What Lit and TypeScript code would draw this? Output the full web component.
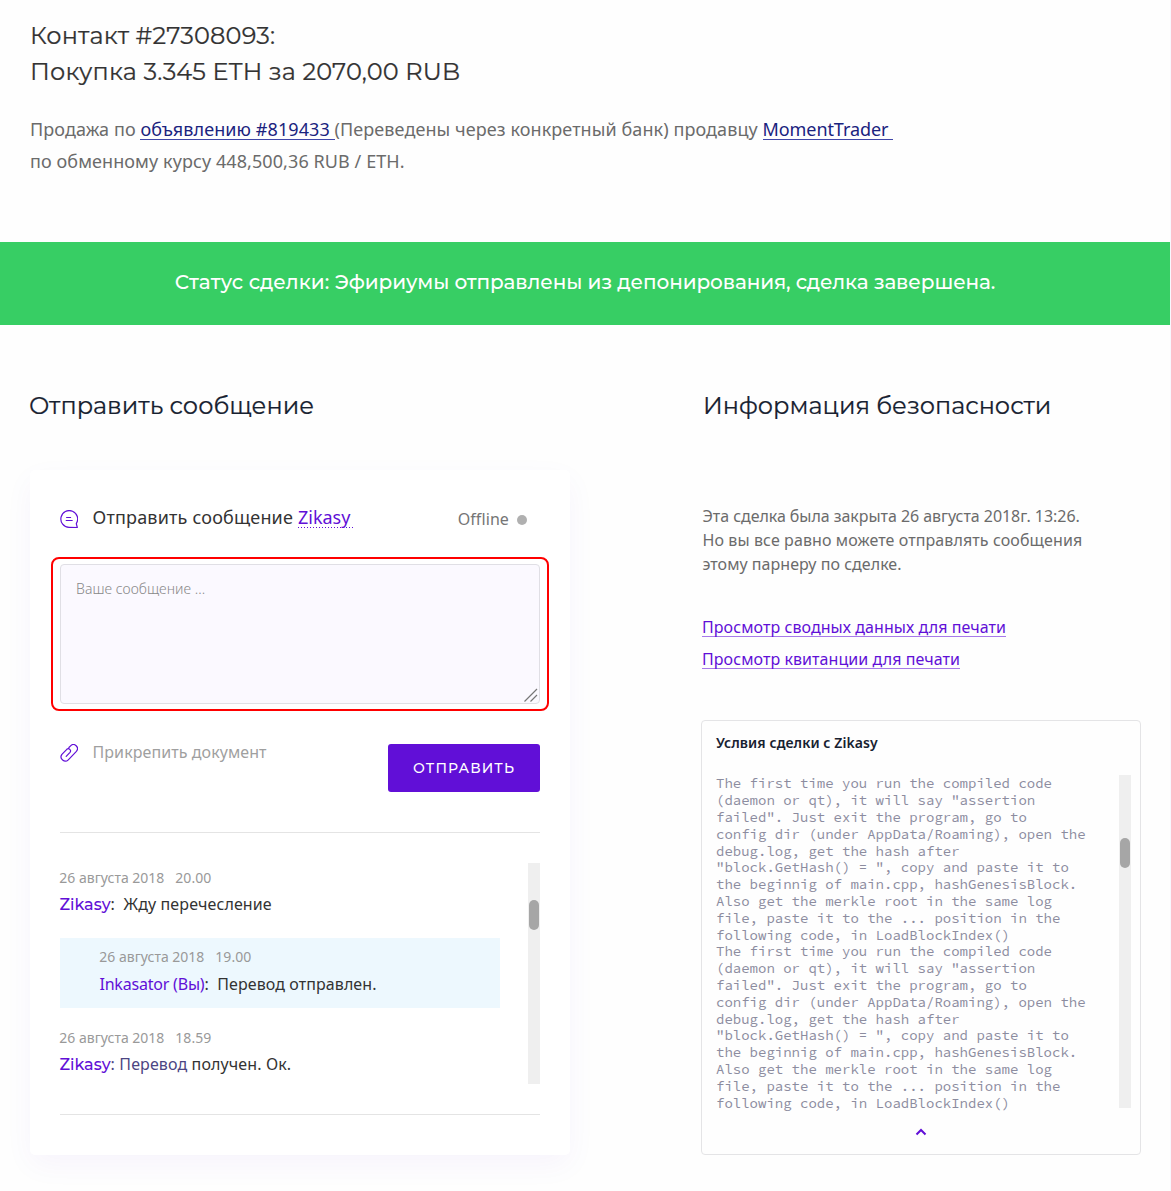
import { LitElement, html, css } from "lit";
import { customElement } from "lit/decorators.js";

interface Message {
  date: string;
  time: string;
  author: string;
  own?: boolean;
  text: unknown;
}

const TERMS = [
  'The first time you run the compiled code',
  '(daemon or qt), it will say "assertion',
  'failed". Just exit the program, go to',
  'config dir (under AppData/Roaming), open the',
  'debug.log, get the hash after',
  '"block.GetHash() = ", copy and paste it to',
  'the beginnig of main.cpp, hashGenesisBlock.',
  'Also get the merkle root in the same log',
  'file, paste it to the ... position in the',
  'following code, in LoadBlockIndex()',
].join("\n");

const MESSAGES: Message[] = [
  { date: "26 августа 2018", time: "20.00", author: "Zikasy", text: html`:&nbsp; Жду перечесление` },
  { date: "26 августа 2018", time: "19.00", author: "Inkasator (Вы)", own: true, text: html`:&nbsp; Перевод отправлен.` },
  { date: "26 августа 2018", time: "18.59", author: "Zikasy", text: html`<span class="tint">: Перевод</span> получен. Ок.` },
];

@customElement("app-root")
export class AppRoot extends LitElement {
  static styles = css`
    :host {
      display: block;
      box-sizing: border-box;
      width: 1171px;
      height: 1191px;
      overflow: hidden;
      background: #fefefe;
      border-right: 1px solid #f8f7fe;
      font-family: "Noto Sans", sans-serif;
      color: #333;
    }
    * { box-sizing: border-box; }
    h1, h2, h3, p { margin: 0; font-weight: 400; }
    h1, h2, .status, .send { font-family: Montserrat, Inter, sans-serif; white-space: nowrap; }
    .intro { padding: 18px 30px 0; height: 242px; }
    h1 { font-size: 24px; line-height: 36px; letter-spacing: .17px; -webkit-text-stroke: .2px #333; }
    .desc { margin-top: 23px; font-size: 18px; line-height: 32px; color: #6b6b6b; white-space: pre; letter-spacing: .085px; }
    .desc a { color: #1a237e; text-decoration: none; background: linear-gradient(#3f46a8, #3f46a8) 0 22px / 100% 1px no-repeat; }
    .desc .seller { letter-spacing: -.08px; }
    .status {
      height: 83px; background: #37ce64; color: #fff; font-size: 20px; font-weight: 500;
      line-height: 81px; text-align: center; letter-spacing: -.1px;
    }
    .status span { letter-spacing: .08px; }
    .cols { display: grid; grid-template-columns: 672px 1fr; padding-left: 30px; }
    h2 { font-size: 24px; line-height: 36px; margin: 63px 0 0 -1px; color: #172130; letter-spacing: .03px; -webkit-text-stroke: .2px #172130; }
    .security h2 { margin-left: 1px; letter-spacing: 0; }
    .card {
      width: 540px; height: 685px; margin-top: 46px; padding: 0 30px; background: #fff;
      border-radius: 5px; box-shadow: 0 10px 30px rgba(97, 15, 215, .045);
    }
    .head { display: flex; align-items: center; height: 96px; }
    .head svg, .attach svg { display: block; flex: none; margin-right: 14.5px; }
    .head svg { margin-top: 2px; }
    .title { font-size: 18px; line-height: 24px; flex: 1; white-space: pre; letter-spacing: .18px; margin-top: -2px; }
    .title a { color: #610fd7; letter-spacing: 0; background: repeating-linear-gradient(90deg, #610fd7 0 1px, transparent 1px 3px) 0 22px / 100% 1px no-repeat; }
    .offline { display: flex; align-items: center; gap: 8px; font-size: 16px; color: #757575; margin-right: 13px; padding-top: 4px; letter-spacing: .1px; }
    .offline span { margin-top: -2px; }
    .dot { width: 10px; height: 10px; border-radius: 50%; background: #b0b0b0; }
    .focus { margin: -9px -9px 0; height: 154px; padding: 5px 7px; border: 2px solid #f00; border-radius: 8px; }
    .area {
      display: flex; justify-content: space-between; height: 140px; padding: 14px 1px 1px 15px;
      border: 1px solid #e0dfe5; border-radius: 4px; background: #fbf9ff; font-size: 14px; line-height: 19px;
      font-weight: 300; color: #888; letter-spacing: .06px;
    }
    .area svg { align-self: flex-end; }
    .tools { display: flex; justify-content: space-between; align-items: flex-start; margin-top: 33px; height: 88px; }
    .attach { display: flex; font-size: 16px; line-height: 18px; color: #9f9f9f; letter-spacing: .08px; }
    .attach span { margin-top: -1px; }
    .send {
      width: 152px; height: 48px; border: 0; border-radius: 3px; background: #610fd7; color: #fff; padding: 0;
      font-size: 14px; font-weight: 500; letter-spacing: 1.1px;
    }
    .chat { display: flex; justify-content: space-between; border: solid #e4e4e4; border-width: 1px 0; height: 283px; padding-top: 30px; }
    .list { width: 440px; }
    .msg { height: 75px; padding-top: 4px; }
    .msg.own { height: 70px; margin-bottom: 15px; padding-left: 40px; padding-top: 8px; background: #edf8fe; }
    .meta { font-size: 14px; line-height: 22px; color: #999; display: flex; gap: 11px; margin-left: -.7px; }
    .line { font-size: 16px; line-height: 24px; padding-top: 3px; white-space: pre; letter-spacing: .12px; margin-left: -.6px; }
    .own .line { padding-top: 4px; letter-spacing: .08px; }
    .own .author { letter-spacing: -.2px; }
    .author { color: #610fd7; }
    .strong { font-family: Montserrat, Inter, sans-serif; font-weight: 500; letter-spacing: 0; }
    .tint { color: #4c4583; }
    .track { width: 12px; height: 221px; padding-top: 37px; padding-left: 1px; background: #efefef; }
    .thumb { width: 10px; height: 30px; border-radius: 5px; background: #a6a6a6; }
    .closed { margin: 80px 0 0 .5px; font-size: 16px; line-height: 24px; color: #6b6b6b; white-space: nowrap; }
    .closed span { display: block; letter-spacing: .04px; }
    .closed .first { letter-spacing: -.05px; }
    .closed .second { letter-spacing: .1px; }
    .links { display: flex; flex-direction: column; align-items: flex-start; gap: 8px; margin-top: 39px; font-size: 16px; line-height: 24px; letter-spacing: .07px; }
    .links a { color: #610fd7; background: linear-gradient(#a77ae9, #a77ae9) 0 21px / 100% 1px no-repeat; height: 24px; }
    .terms { width: 440px; height: 435px; margin: 49px 0 0 -1px; padding: 12px 9px 0 14px; border: 1px solid #e4e4e6; border-radius: 4px; }
    h3 { font-size: 14px; line-height: 20px; font-weight: 600; color: #172130; letter-spacing: .07px; }
    .body { display: flex; justify-content: space-between; height: 333px; margin-top: 22px; }
    .code { margin: .45px 0 0; font: 14px/16.8px "Source Code Pro", "Liberation Mono", monospace; color: #8c8c9f; }
    .terms .track { height: 333px; padding-top: 63px; }
    .up { display: block; margin: 20px 0 0 199px; }
  `;

  private renderMessage(m: Message) {
    return html`<div class="msg ${m.own ? "own" : ""}">
      <div class="meta"><span>${m.date}</span><span>${m.time}</span></div>
      <div class="line"><span class="author ${m.own ? "" : "strong"}">${m.author}</span>${m.text}</div>
    </div>`;
  }

  render() {
    return html`
      <div class="intro">
        <h1>Контакт #27308093:<br />Покупка 3.345 ETH за 2070,00 RUB</h1>
        <p class="desc">Продажа по <a>объявлению #819433 </a>(Переведены через конкретный банк) продавцу <a class="seller">MomentTrader </a>
по обменному курсу 448,500,36 RUB / ETH.</p>
      </div>
      <div class="status"><span>Статус сделки: </span>Эфириумы отправлены из депонирования, сделка завершена.</div>
      <div class="cols">
        <section>
          <h2>Отправить сообщение</h2>
          <div class="card">
            <div class="head">
              <svg width="18" height="18" viewBox="0 0 18 18" fill="none" stroke="#610fd7" stroke-width="1.2" stroke-linecap="round" stroke-linejoin="round">
                <path d="M16.3 13.6A8.4 8.4 0 1 0 9 17.4L17.3 17.5z" /><path d="M6.6 7.5h4M6.2 10.5h6" />
              </svg>
              <div class="title">Отправить сообщение <a>Zikasy </a></div>
              <div class="offline"><span>Offline</span><div class="dot"></div></div>
            </div>
            <div class="focus"><div class="area">Ваше сообщение ...
              <svg width="14" height="14" viewBox="0 0 14 14" stroke="#777" stroke-width="1.2"><path d="M.5 13.5 13 1M6.5 13.5 13 7" /></svg>
            </div></div>
            <div class="tools">
              <div class="attach">
                <svg width="18" height="18" viewBox="0 0 18 18" fill="none" stroke="#610fd7" stroke-width="1.2" stroke-linecap="round" stroke-linejoin="round">
                  <path d="M8.9 3.5L10.6 1.8A4 4 0 0 1 16.4 7.3L8.3 15.8A4.2 4.2 0 0 1 1.9 10.4L6.8 5.3A2.2 2.2 0 0 1 10 8.3L6.2 12.4" />
                </svg><span>Прикрепить документ</span>
              </div>
              <button class="send">ОТПРАВИТЬ</button>
            </div>
            <div class="chat">
              <div class="list">${MESSAGES.map((m) => this.renderMessage(m))}</div>
              <div class="track"><div class="thumb"></div></div>
            </div>
          </div>
        </section>
        <section class="security">
          <h2>Информация безопасности</h2>
          <p class="closed">
            <span class="first">Эта сделка была закрыта 26 августа 2018г. 13:26.</span>
            <span class="second">Но вы все равно можете отправлять сообщения</span>
            <span>этому парнеру по сделке.</span>
          </p>
          <div class="links"><a>Просмотр сводных данных для печати</a><a>Просмотр квитанции для печати</a></div>
          <div class="terms">
            <h3>Услвия сделки с Zikasy</h3>
            <div class="body">
              <pre class="code">${TERMS + "\n" + TERMS}</pre>
              <div class="track"><div class="thumb"></div></div>
            </div>
            <svg class="up" width="12" height="8" viewBox="0 0 12 8" fill="none" stroke="#610fd7" stroke-width="2"><path d="M1.5 6.5 6 2l4.5 4.5" /></svg>
          </div>
        </section>
      </div>
    `;
  }
}
